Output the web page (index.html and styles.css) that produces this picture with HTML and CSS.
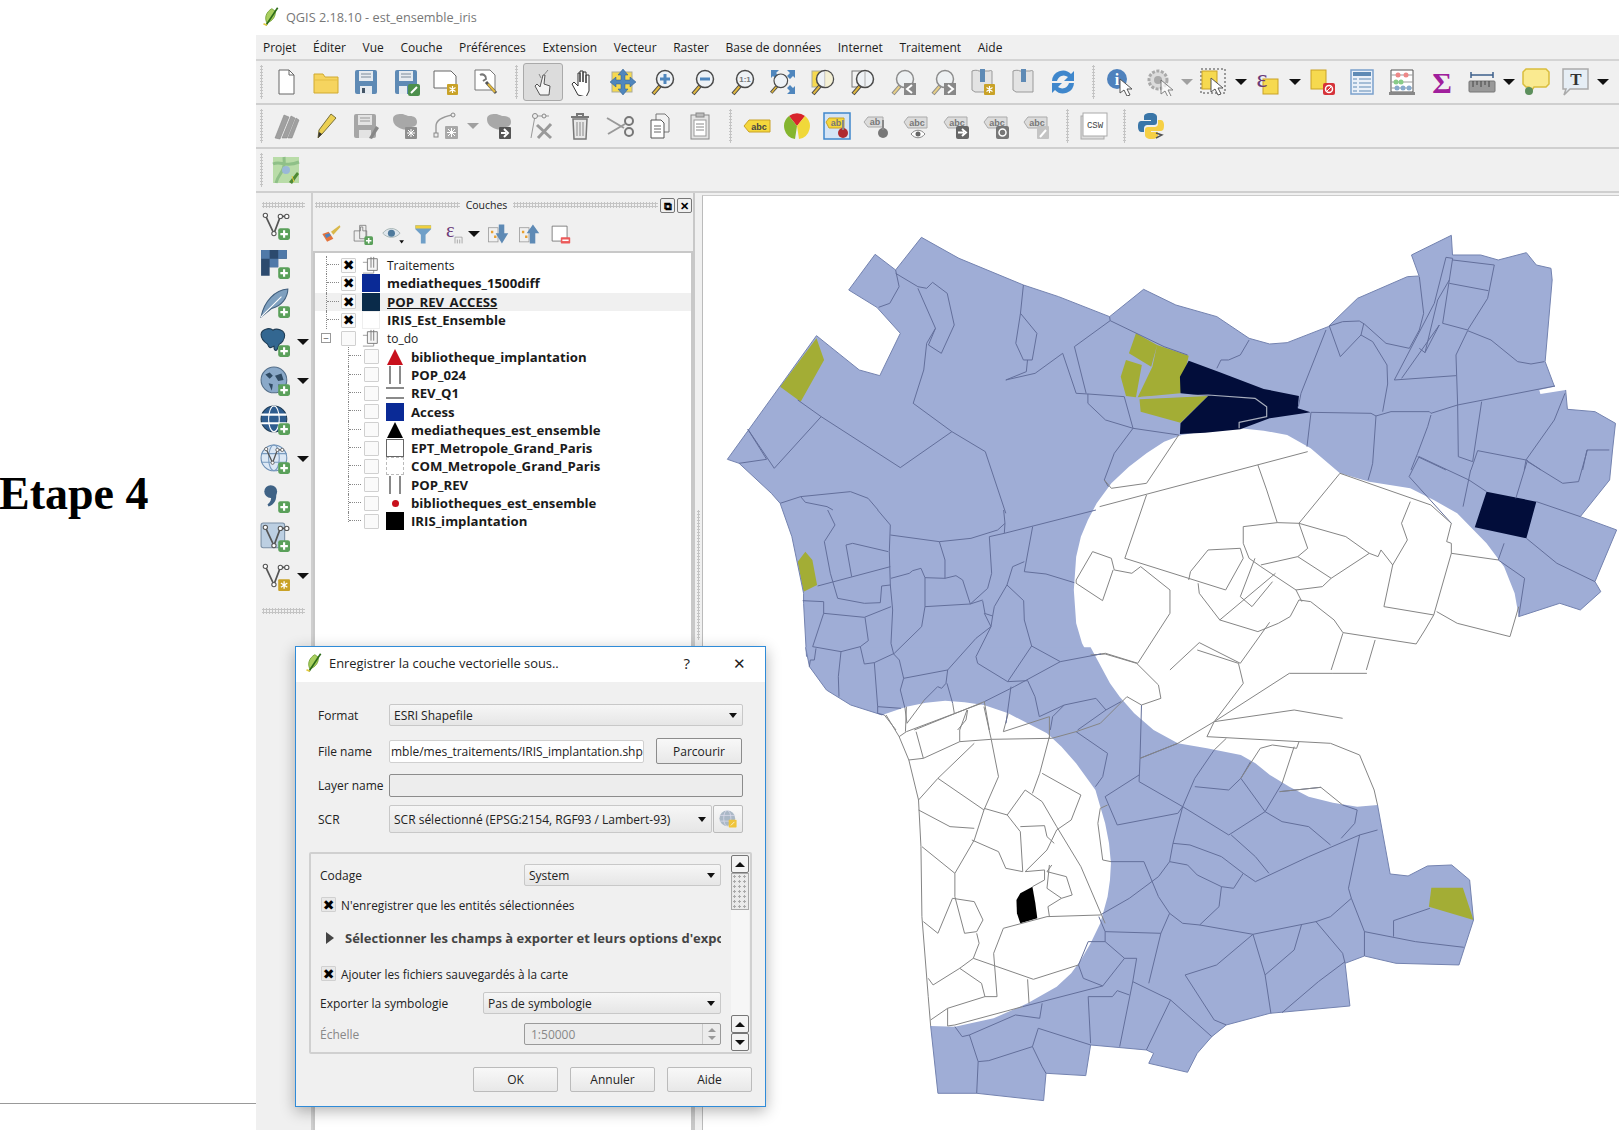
FILE: index.html
```html
<!DOCTYPE html>
<html lang="fr">
  <head>
    <meta charset="utf-8">
    <title>QGIS 2.18.10 - est_ensemble_iris</title>
    <link rel="stylesheet" href="styles.css">
  </head>
  <body>
    <svg class="defs" width="0" height="0">
      <defs>
        <g id="bplus"><rect width="11" height="11" rx="2" fill="#5aa05a"/><path d="M5.5 2v7M2 5.5h7" stroke="#fff" stroke-width="2"/></g>
        <g id="bstar"><rect width="11" height="11" rx="1" fill="#c9a227"/><path d="M5.5 2v7M2.5 3.5l6 4M8.5 3.5l-6 4" stroke="#fff" stroke-width="1.2"/></g>
        <g id="glass"><path d="M11 18L4 26" stroke="#444" stroke-width="4"/><path d="M10.5 18.5L4.5 25.5" stroke="#e0b840" stroke-width="2"/><circle cx="16" cy="11" r="8.5" fill="#eef2f6" stroke="#4a4a4a" stroke-width="1.5"/></g>
        <g id="vee"><path d="M5 5l8 17 6-16h6" fill="none" stroke="#555" stroke-width="1.6"/><circle cx="5" cy="5" r="2" fill="#fff" stroke="#555"/><circle cx="13" cy="22" r="2" fill="#fff" stroke="#555"/><circle cx="19" cy="6" r="2" fill="#fff" stroke="#555"/><circle cx="25" cy="6" r="2" fill="#fff" stroke="#555"/></g>
        <g id="cursor"><path d="M0 0l0 14 4-3 3 6 3-1-3-6 5 0z" fill="#fff" stroke="#555"/></g>
        <symbol id="i-new" viewBox="0 0 28 28"><path d="M7 2h10l5 5v19H7z" fill="#fff" stroke="#666"/><path d="M17 2v5h5" fill="none" stroke="#666"/></symbol>
        <symbol id="i-open" viewBox="0 0 28 28"><path d="M2 6h9l2 3h13v16H2z" fill="#f6d45f" stroke="#d0aa30"/><path d="M2 12h24" stroke="#e3bd45"/></symbol>
        <symbol id="i-save" viewBox="0 0 28 28"><rect x="3" y="2" width="22" height="24" rx="2" fill="#5e8ab5"/><rect x="7" y="3" width="14" height="10" fill="#e6ebf0"/><path d="M9 6h10M9 9h10" stroke="#7a8a9a"/><rect x="8" y="18" width="12" height="8" fill="#e6ebf0"/><rect x="10" y="20" width="3" height="5" fill="#456"/></symbol>
        <symbol id="i-saveas" viewBox="0 0 28 28"><rect x="3" y="2" width="22" height="24" rx="2" fill="#5e8ab5"/><rect x="7" y="3" width="14" height="10" fill="#e6ebf0"/><path d="M9 6h10M9 9h10" stroke="#7a8a9a"/><rect x="7" y="18" width="8" height="8" fill="#e6ebf0"/><rect x="16" y="16" width="12" height="12" rx="2" fill="#4c8f4c"/><path d="M19 25l6-6" stroke="#fff" stroke-width="2"/></symbol>
        <symbol id="i-print" viewBox="0 0 28 28"><path d="M2 3h17l5 5v12H2z" fill="#fff" stroke="#666"/><use href="#bstar" x="15" y="16"/></symbol>
        <symbol id="i-mgr" viewBox="0 0 28 28"><path d="M3 2h15l5 5v15H3z" fill="#fff" stroke="#777"/><path d="M8 7a4 4 0 0 1 6 4l-3 2" fill="none" stroke="#777" stroke-width="2"/><path d="M14 14l10 11" stroke="#555" stroke-width="3"/><path d="M16 16l7 8" stroke="#e0b840" stroke-width="2"/></symbol>
        <symbol id="i-touch" viewBox="0 0 28 28"><path d="M11 27l-5-9 2-2 3 3 3-12 2 0-1 9 6 2-1 9z" fill="#f4f4f4" stroke="#555"/><path d="M14 8l5-6M12 10l-2-4" stroke="#888"/></symbol>
        <symbol id="i-hand" viewBox="0 0 28 28"><path d="M9 27l-6-11 2-2 4 4V5h2v9-11h3v11-10h3v11-8h3v16l-3 6z" fill="#fff" stroke="#333"/></symbol>
        <symbol id="i-pan" viewBox="0 0 28 28"><rect x="3" y="4" width="20" height="20" fill="#f6d94f" stroke="#aa9"/><path d="M14 1l5 6h-3v5h5V9l6 5-6 5v-3h-5v5h3l-5 6-5-6h3v-5H7v3L1 14l6-5v3h5V7H9z" fill="#4f86bd" stroke="#2c5a8c" stroke-width=".5"/></symbol>
        <symbol id="i-zin" viewBox="0 0 28 28"><use href="#glass"/><path d="M16 6v10M11 11h10" stroke="#4f86bd" stroke-width="3"/></symbol>
        <symbol id="i-zout" viewBox="0 0 28 28"><use href="#glass"/><path d="M11 11h10" stroke="#4f86bd" stroke-width="3"/></symbol>
        <symbol id="i-z11" viewBox="0 0 28 28"><use href="#glass"/><text x="16" y="14" class="ic-tx">1:1</text></symbol>
        <symbol id="i-zfull" viewBox="0 0 28 28"><path d="M2 2h8l-3 3 3 3-3 3-3-3-2 2zM26 2h-8l3 3-3 3 3 3 3-3 2 2zM26 26h-8l3-3-3-3 3-3 3 3 2-2z" fill="#4f86bd"/><use href="#glass" transform="translate(-1 4) scale(.8)"/></symbol>
        <symbol id="i-zlayer" viewBox="0 0 28 28"><rect x="3" y="3" width="14" height="16" fill="#f6d94f" stroke="#aa9"/><use href="#glass"/><path d="M16 3v16" stroke="#aaa"/><path d="M16 3a8 8 0 0 1 0 16z" fill="#f6f0c8" opacity=".7"/></symbol>
        <symbol id="i-zsel" viewBox="0 0 28 28"><rect x="3" y="3" width="14" height="16" fill="#f2f2f2" stroke="#777"/><use href="#glass"/><path d="M16 3v16" stroke="#aaa"/></symbol>
        <symbol id="i-zlast" viewBox="0 0 28 28"><use href="#glass" opacity=".6"/><rect x="15" y="15" width="12" height="12" fill="#888"/><path d="M23 17l-5 4 5 4" fill="none" stroke="#fff" stroke-width="2"/></symbol>
        <symbol id="i-znext" viewBox="0 0 28 28"><use href="#glass" opacity=".6"/><rect x="15" y="15" width="12" height="12" fill="#888"/><path d="M19 17l5 4-5 4" fill="none" stroke="#fff" stroke-width="2"/></symbol>
        <symbol id="i-book" viewBox="0 0 28 28"><path d="M4 3c3-1 5-1 7 0l10 0c2-1 3 0 3 0v21H7l-3-2z" fill="#e3e3e3" stroke="#999"/><rect x="12" y="1" width="5" height="13" fill="#5e8ab5"/></symbol>
        <symbol id="i-bookn" viewBox="0 0 28 28"><path d="M3 3c3-1 5-1 7 0l10 0c2-1 3 0 3 0v21H6l-3-2z" fill="#e3e3e3" stroke="#999"/><rect x="11" y="1" width="5" height="13" fill="#5e8ab5"/><use href="#bstar" x="15" y="16"/></symbol>
        <symbol id="i-refresh" viewBox="0 0 28 28"><path d="M3 13a11 11 0 0 1 19-7l3-3v10H15l4-4a7 7 0 0 0-11 4z" fill="#3f87cc"/><path d="M25 15a11 11 0 0 1-19 7l-3 3V15h10l-4 4a7 7 0 0 0 11-4z" fill="#3f87cc"/></symbol>
        <symbol id="i-identify" viewBox="0 0 28 28"><circle cx="11" cy="11" r="10" fill="#4f82bd"/><text x="11" y="17" class="ic-i">i</text><use href="#cursor" x="14" y="11"/></symbol>
        <symbol id="i-action" viewBox="0 0 28 28"><circle cx="12" cy="12" r="9" fill="#dcdcdc" stroke="#aaa" stroke-width="3" stroke-dasharray="3 1.5"/><circle cx="12" cy="12" r="4" fill="#aaa"/><use href="#cursor" x="15" y="12" opacity=".7"/></symbol>
        <symbol id="i-select" viewBox="0 0 28 28"><rect x="1" y="1" width="24" height="24" fill="none" stroke="#444" stroke-dasharray="2 2"/><rect x="2" y="3" width="15" height="18" fill="#f6d94f" stroke="#c9a227"/><use href="#cursor" x="11" y="10"/></symbol>
        <symbol id="i-expr" viewBox="0 0 28 28"><rect x="9" y="11" width="15" height="15" fill="#f6d94f" stroke="#c9a227"/><text x="8" y="19" class="ic-eps">&#949;</text></symbol>
        <symbol id="i-desel" viewBox="0 0 28 28"><rect x="3" y="2" width="15" height="19" fill="#f6d94f" stroke="#c9a227"/><rect x="15" y="15" width="12" height="12" rx="2" fill="#d6333a"/><circle cx="21" cy="21" r="3.5" fill="none" stroke="#fff" stroke-width="1.5"/><path d="M19 23l4-4" stroke="#fff"/></symbol>
        <symbol id="i-table" viewBox="0 0 28 28"><rect x="3" y="2" width="22" height="24" fill="#eaf0f8" stroke="#7aa0cc" stroke-width="1.5"/><rect x="5" y="4" width="18" height="4" fill="#5e8ab5"/><path d="M5 11h4M11 11h12M5 15h4M11 15h12M5 19h4M11 19h12M5 23h4M11 23h12" stroke="#5e8ab5"/></symbol>
        <symbol id="i-stats" viewBox="0 0 28 28"><path d="M3 2h22v22H3z" fill="#fff" stroke="#555"/><path d="M3 7h22M3 14h22M3 20h22" stroke="#999"/><circle cx="10" cy="7" r="2.5" fill="#e88"/><circle cx="18" cy="7" r="2.5" fill="#e88"/><circle cx="8" cy="14" r="2.5" fill="#8c8"/><circle cx="13" cy="14" r="2.5" fill="#8c8"/><circle cx="9" cy="20" r="2.5" fill="#8ac"/><circle cx="15" cy="20" r="2.5" fill="#8ac"/><circle cx="21" cy="20" r="2.5" fill="#8ac"/><rect x="1" y="24" width="26" height="3" fill="#888"/></symbol>
        <symbol id="i-sum" viewBox="0 0 28 28"><text x="14" y="25" class="ic-sum">&#931;</text></symbol>
        <symbol id="i-ruler" viewBox="0 0 28 28"><path d="M3 7h22M3 4v6M25 4v6" stroke="#3d5f8a" stroke-width="1.5"/><rect x="1" y="13" width="26" height="11" rx="1" fill="#999" stroke="#777"/><path d="M5 13v6M9 13v4M13 13v6M17 13v4M21 13v6" stroke="#444"/></symbol>
        <symbol id="i-tip" viewBox="0 0 28 28"><path d="M4 1h20l3 3v12l-3 3H12l-4 6-1-6H4l-3-3V4z" fill="#faea90" stroke="#d9bd3c" stroke-width="1.5"/><circle cx="7" cy="23" r="4" fill="#5c8f5c"/></symbol>
        <symbol id="i-text" viewBox="0 0 28 28"><path d="M1 1h25v20H8l-6 6 2-6H1z" fill="#e6eef5" stroke="#aaa" stroke-width="1.5"/><text x="14" y="17" class="ic-t">T</text></symbol>
        <symbol id="i-digit" viewBox="0 0 28 28"><path d="M3 26L12 3l5 2-9 22zM10 26l9-22 4 2-8 20zM16 26l8-20 3 2-7 18z" fill="#a0a0a0" stroke="#808080" stroke-width=".5"/></symbol>
        <symbol id="i-pencil" viewBox="0 0 28 28"><path d="M6 26l1-8L19 2l5 4L10 22z" fill="#ecd053" stroke="#776f3a"/><path d="M6 26l1-6 3 2z" fill="#333"/></symbol>
        <symbol id="i-savegr" viewBox="0 0 28 28"><rect x="2" y="2" width="22" height="24" rx="2" fill="#a6a6a6"/><rect x="6" y="3" width="14" height="10" fill="#e3e3e3"/><path d="M8 6h10M8 9h10" stroke="#999"/><rect x="7" y="18" width="12" height="8" fill="#e3e3e3"/><path d="M17 26l7-12 3 2-7 11z" fill="#888"/></symbol>
        <symbol id="i-poly" viewBox="0 0 28 28"><path d="M1 7c0-4 4-5 8-5s5 2 9 2 7 2 7 6-3 5-7 5-2 4-8 2S1 12 1 7z" fill="#a8a8a8"/><rect x="13" y="15" width="12" height="12" rx="1" fill="#8e8e8e"/><path d="M19 17v8M15 21h8M16 18l6 6M22 18l-6 6" stroke="#fff"/></symbol>
        <symbol id="i-node" viewBox="0 0 28 28"><path d="M4 25V14c0-5 6-9 16-11" fill="none" stroke="#999" stroke-width="1.4"/><rect x="2" y="21" width="4" height="4" fill="#eee" stroke="#888"/><circle cx="21" cy="3" r="2" fill="#eee" stroke="#888"/><rect x="13" y="14" width="13" height="13" rx="1" fill="#a8a8a8"/><path d="M19.5 16v9M15 20.5h9M16 17l7 7M23 17l-7 7" stroke="#fff"/></symbol>
        <symbol id="i-move" viewBox="0 0 28 28"><path d="M1 7c0-4 4-5 8-5s5 2 9 2 7 2 7 6-3 5-7 5-2 4-8 2S1 12 1 7z" fill="#a8a8a8"/><rect x="13" y="15" width="12" height="12" rx="1" fill="#555"/><path d="M15 21h5M18 17l4 4-4 4" fill="none" stroke="#fff" stroke-width="2"/></symbol>
        <symbol id="i-tool" viewBox="0 0 28 28"><path d="M5 26L9 4h14" fill="none" stroke="#999"/><circle cx="9" cy="4" r="2.5" fill="#eee" stroke="#888"/><circle cx="18" cy="4" r="2" fill="#eee" stroke="#888"/><path d="M11 13l14 13M25 12L12 26" stroke="#999" stroke-width="3"/></symbol>
        <symbol id="i-trash" viewBox="0 0 28 28"><path d="M5 5h18M11 5V2h6v3" fill="none" stroke="#777" stroke-width="2"/><path d="M7 7h14l-1 20H8z" fill="#e8e8e8" stroke="#777" stroke-width="1.5"/><path d="M11 10v14M14 10v14M17 10v14" stroke="#888"/></symbol>
        <symbol id="i-scissors" viewBox="0 0 28 28"><path d="M1 6l17 10M2 22l17-10" stroke="#999" stroke-width="2"/><circle cx="23" cy="9" r="4" fill="none" stroke="#777" stroke-width="2"/><circle cx="23" cy="20" r="4" fill="none" stroke="#777" stroke-width="2"/></symbol>
        <symbol id="i-copy" viewBox="0 0 28 28"><path d="M10 2h9l4 4v14H10z" fill="#f2f2f2" stroke="#777"/><path d="M5 8h10l3 3v15H5z" fill="#fff" stroke="#555"/><path d="M8 14h7M8 17h7M8 20h7" stroke="#666"/></symbol>
        <symbol id="i-paste" viewBox="0 0 28 28"><rect x="5" y="3" width="18" height="24" fill="#e4e4e4" stroke="#888"/><rect x="10" y="1" width="8" height="4" fill="#bbb" stroke="#888"/><rect x="8" y="8" width="12" height="16" fill="#fff" stroke="#999"/><path d="M10 12h8M10 15h8M10 18h8" stroke="#888"/></symbol>
        <symbol id="i-abc" viewBox="0 0 28 28"><path d="M1 14l5-6h21v12H6z" fill="#f5d73c" stroke="#c9a227"/><text x="16" y="18" class="ic-abc">abc</text></symbol>
        <symbol id="i-pie" viewBox="0 0 28 28"><path d="M14 14L6 4a13 13 0 0 1 16 0z" fill="#d8242b"/><path d="M14 14L6 4A13 13 0 0 0 12 27z" fill="#84b52f"/><path d="M14 14l8-10a13 13 0 0 1-6 23z" fill="#f0d83a"/></symbol>
        <symbol id="i-pin" viewBox="0 0 28 28"><rect x="1" y="1" width="26" height="26" fill="#d5e4f5" stroke="#3f87cc" stroke-width="1.5"/><path d="M3 10l3-4h15v10H6z" fill="#f5d73c" stroke="#c9a227"/><text x="13" y="14" class="ic-ab">ab</text><circle cx="20" cy="21" r="5" fill="#b02a30"/><path d="M20 8v10" stroke="#888" stroke-width="2"/></symbol>
        <symbol id="i-lblpin" viewBox="0 0 28 28"><path d="M1 10l4-5h15v10H5z" fill="#dcdcdc" stroke="#aaa"/><text x="12" y="13" class="ic-ab">ab</text><circle cx="20" cy="21" r="5" fill="#777"/><path d="M20 8v10" stroke="#888" stroke-width="2"/></symbol>
        <symbol id="i-lbleye" viewBox="0 0 28 28"><path d="M1 10l4-5h19v11H5z" fill="#dcdcdc" stroke="#aaa"/><text x="14" y="14" class="ic-ab">abc</text><path d="M8 22c4-5 10-5 14 0-4 5-10 5-14 0z" fill="#fff" stroke="#888"/><circle cx="15" cy="22" r="2.5" fill="#666"/></symbol>
        <symbol id="i-lblmv" viewBox="0 0 28 28"><path d="M1 10l4-5h19v11H5z" fill="#dcdcdc" stroke="#aaa"/><text x="14" y="14" class="ic-ab">abc</text><rect x="13" y="14" width="13" height="13" rx="2" fill="#666"/><path d="M15 20.5h6M19 17l4 3.5-4 3.5" fill="none" stroke="#fff" stroke-width="2"/></symbol>
        <symbol id="i-lblrot" viewBox="0 0 28 28"><path d="M1 10l4-5h19v11H5z" fill="#dcdcdc" stroke="#aaa"/><text x="14" y="14" class="ic-ab">abc</text><rect x="13" y="14" width="13" height="13" rx="2" fill="#777"/><circle cx="19.5" cy="20.5" r="3.5" fill="none" stroke="#fff" stroke-width="1.5"/></symbol>
        <symbol id="i-lbledit" viewBox="0 0 28 28"><path d="M1 10l4-5h19v11H5z" fill="#dcdcdc" stroke="#aaa"/><text x="14" y="14" class="ic-ab">abc</text><rect x="14" y="14" width="12" height="13" rx="1" fill="#c4c4c4"/><path d="M17 25l6-7" stroke="#fff" stroke-width="2"/></symbol>
        <symbol id="i-csw" viewBox="0 0 28 28"><rect x="1" y="4" width="23" height="23" fill="#ddd" stroke="#aaa"/><rect x="3" y="1" width="24" height="23" fill="#fff" stroke="#aaa"/><text x="15" y="16" class="ic-csw">CSW</text></symbol>
        <symbol id="i-python" viewBox="0 0 28 28"><path d="M14 1c-6 0-7 2-7 4v3h7v1H4c-3 0-3 4-3 6s1 5 3 5h3v-4c0-2 2-3 3-3h7c2 0 3-1 3-3V5c0-2-2-4-6-4z" fill="#3a76a8"/><path d="M14 27c6 0 7-2 7-4v-3h-7v-1h10c3 0 3-4 3-6s-1-5-3-5h-3v4c0 2-2 3-3 3h-7c-2 0-3 1-3 3v5c0 2 2 4 6 4z" fill="#f6d045"/><path d="M19 21l6 2-6 3" fill="none" stroke="#555" stroke-width="1.4"/></symbol>
        <symbol id="i-map" viewBox="0 0 28 28"><rect x="1" y="1" width="26" height="26" fill="#b9dca8"/><path d="M1 8c8-4 12 4 26-2M4 27c2-10 10-10 8-26" stroke="#8fc088" stroke-width="3" fill="none"/><circle cx="14" cy="14" r="4" fill="#9ab8d8"/><path d="M17 26l8-10 2 2-7 10z" fill="#4f8a34"/><path d="M22 26l-2-6" stroke="#e2c93f"/></symbol>
        <symbol id="i-vadd" viewBox="0 0 28 28"><use href="#vee"/><use href="#bplus" x="17" y="17"/></symbol>
        <symbol id="i-radd" viewBox="0 0 28 28"><path d="M1 1h24v8h-8v8H9v8H1z" fill="#2c4a6e"/><path d="M1 1h8v8H1zM17 1h8v8h-8zM9 9h8v8H9z" fill="#5079a8"/><use href="#bplus" x="17" y="17"/></symbol>
        <symbol id="i-feather" viewBox="0 0 28 28"><path d="M1 27C4 12 14 2 26 1c0 8-6 16-15 18z" fill="#7fa0bf" stroke="#42607e"/><path d="M1 27L20 8" stroke="#fff"/><use href="#bplus" x="17" y="17"/></symbol>
        <symbol id="i-pg" viewBox="0 0 28 28"><path d="M1 7c0-5 8-7 11-4 3-2 11-1 11 5 0 4-3 7-5 8l-2 5c-2 2-3 0-3-3-3 1-4 3-6-2C4 14 1 11 1 7z" fill="#336791" stroke="#1d3a52"/><use href="#bplus" x="17" y="17"/></symbol>
        <symbol id="i-wms" viewBox="0 0 28 28"><circle cx="13" cy="13" r="12" fill="#8aa9c9" stroke="#526d88"/><path d="M5 8l4-2 3 3-3 3zM14 9l6-2 2 6-5 1zM8 16l4 1-1 6zM17 17l3 1-2 3z" fill="#2f4a63"/><use href="#bplus" x="17" y="17"/></symbol>
        <symbol id="i-wfs" viewBox="0 0 28 28"><circle cx="13" cy="13" r="12" fill="#2f5d8f" stroke="#1d3a52"/><path d="M1 9h24M1 17h24" stroke="#fff" stroke-width="2"/><ellipse cx="13" cy="13" rx="5" ry="12" fill="none" stroke="#fff"/><use href="#bplus" x="17" y="17"/></symbol>
        <symbol id="i-wcs" viewBox="0 0 28 28"><circle cx="13" cy="13" r="12" fill="#dce8f5" stroke="#6a8db3"/><path d="M1 9h24M1 17h24" stroke="#7a9cc0"/><ellipse cx="13" cy="13" rx="5" ry="12" fill="none" stroke="#7a9cc0"/><use href="#vee" transform="translate(2 1) scale(.75)"/><use href="#bplus" x="17" y="17"/></symbol>
        <symbol id="i-comma" viewBox="0 0 28 28"><circle cx="10" cy="8" r="6" fill="#3f6285"/><path d="M15 9c1 7-2 11-7 13l-1-2c3-2 4-5 3-8z" fill="#3f6285"/><use href="#bplus" x="17" y="17"/></symbol>
        <symbol id="i-vbox" viewBox="0 0 28 28"><rect x="1" y="1" width="22" height="23" rx="2" fill="#bccfe2" stroke="#7a8fa5"/><use href="#vee"/><use href="#bplus" x="17" y="17"/></symbol>
        <symbol id="i-vnew" viewBox="0 0 28 28"><use href="#vee"/><use href="#bstar" x="17" y="17"/></symbol>
        <symbol id="i-style" viewBox="0 0 28 28"><path d="M3 14l8-3 6 9-8 4z" fill="#e3733c"/><path d="M6 15l6-2 2 3-6 3z" fill="#4f82bd"/><path d="M14 11L25 3l1 2-9 10z" fill="#d9b84a"/></symbol>
        <symbol id="i-group" viewBox="0 0 28 28"><path d="M4 10h8V5h3v5h5v13H4z" fill="#eee" stroke="#777"/><path d="M11 3h8v17h-8z" fill="none" stroke="#777"/><use href="#bplus" x="17" y="17"/></symbol>
        <symbol id="i-treegrp" viewBox="0 0 20 20"><path d="M1 7h12v12H1" fill="none" stroke="#999"/><path d="M6 3h11v13H6z" fill="#f6f6f6" stroke="#777"/><path d="M10 1v12M13 1v12" stroke="#777"/></symbol>
        <symbol id="i-eye" viewBox="0 0 28 28"><path d="M1 13c6-8 16-8 22 0-6 7-16 7-22 0z" fill="#dfe6ec" stroke="#9aa"/><circle cx="12" cy="13" r="4.5" fill="#4f7a9c"/><path d="M22 22h6l-3 4z" fill="#111"/></symbol>
        <symbol id="i-filter" viewBox="0 0 28 28"><path d="M3 3h20v5l-7 7v11h-6V15L3 8z" fill="#6f9fc8"/><path d="M3 3h20v4H3z" fill="#f0cf3e"/></symbol>
        <symbol id="i-eps" viewBox="0 0 28 28"><text x="8" y="18" class="ic-eps">&#949;</text><path d="M14 26v-8h9v8M17 26v-5M20 26v-5" fill="none" stroke="#999"/></symbol>
        <symbol id="i-down" viewBox="0 0 28 28"><rect x="2" y="6" width="12" height="18" fill="#f0f0f0" stroke="#999"/><path d="M5 10h3v3H5zM9 16h3v3H9z" fill="#e8a030"/><path d="M15 2h7v11h5l-8 13-8-13h4z" fill="#5e8ab5"/></symbol>
        <symbol id="i-up" viewBox="0 0 28 28"><rect x="2" y="6" width="12" height="18" fill="#f0f0f0" stroke="#999"/><path d="M5 10h3v3H5zM9 16h3v3H9z" fill="#e8a030"/><path d="M15 26h7V13h5L19 2 11 13h4z" fill="#5e8ab5"/></symbol>
        <symbol id="i-rmlayer" viewBox="0 0 28 28"><path d="M4 4h19v19H4z" fill="#fff" stroke="#666"/><rect x="15" y="18" width="12" height="8" rx="1" fill="#ec5a5a"/><path d="M17 22h8" stroke="#fff" stroke-width="2"/></symbol>
        <symbol id="i-crs" viewBox="0 0 28 28"><circle cx="13" cy="13" r="11" fill="#aab8c6"/><path d="M2 9h22M2 17h22" stroke="#dde"/><ellipse cx="13" cy="13" rx="5" ry="11" fill="none" stroke="#dde"/><rect x="15" y="15" width="11" height="11" rx="1" fill="#f0c43a"/><path d="M18 23l5-5" stroke="#fff"/></symbol>
        <symbol id="i-qgis" viewBox="0 0 24 24"><path d="M13 2C6 6 4 13 7 19c7-2 11-8 10-14z" fill="#a9cf5f" stroke="#6f9d2e"/><path d="M6 22L20 1" stroke="#2c6b1a" stroke-width="2"/><path d="M3 20l4 2" stroke="#e2c93f" stroke-width="2"/></symbol>
      </defs>
    </svg>

    <div class="doc">
      <h1 class="doc-title">Etape 4</h1>
      <div class="doc-rule"></div>
    </div>

    <div class="app">
      <div class="titlebar">
        <svg class="qgis-logo"><use href="#i-qgis"/></svg>
        <span>QGIS 2.18.10 - est_ensemble_iris</span>
      </div>

      <div class="menubar">
        <span>Projet</span><span>Éditer</span><span>Vue</span><span>Couche</span><span>Préférences</span><span>Extension</span><span>Vecteur</span><span>Raster</span><span>Base de données</span><span>Internet</span><span>Traitement</span><span>Aide</span>
      </div>

      <div class="toolbar">
        <i class="grip"></i>
        <b class="tool"><svg><use href="#i-new"/></svg></b>
        <b class="tool"><svg><use href="#i-open"/></svg></b>
        <b class="tool"><svg><use href="#i-save"/></svg></b>
        <b class="tool"><svg><use href="#i-saveas"/></svg></b>
        <b class="tool"><svg><use href="#i-print"/></svg></b>
        <b class="tool"><svg><use href="#i-mgr"/></svg></b>
        <i class="grip wide"></i>
        <b class="tool on"><svg><use href="#i-touch"/></svg></b>
        <b class="tool"><svg><use href="#i-hand"/></svg></b>
        <b class="tool"><svg><use href="#i-pan"/></svg></b>
        <b class="tool"><svg><use href="#i-zin"/></svg></b>
        <b class="tool"><svg><use href="#i-zout"/></svg></b>
        <b class="tool"><svg><use href="#i-z11"/></svg></b>
        <b class="tool"><svg><use href="#i-zfull"/></svg></b>
        <b class="tool"><svg><use href="#i-zlayer"/></svg></b>
        <b class="tool"><svg><use href="#i-zsel"/></svg></b>
        <b class="tool"><svg><use href="#i-zlast"/></svg></b>
        <b class="tool"><svg><use href="#i-znext"/></svg></b>
        <b class="tool"><svg><use href="#i-bookn"/></svg></b>
        <b class="tool"><svg><use href="#i-book"/></svg></b>
        <b class="tool"><svg><use href="#i-refresh"/></svg></b>
        <i class="grip wide"></i>
        <b class="tool"><svg><use href="#i-identify"/></svg></b>
        <b class="tool"><svg><use href="#i-action"/></svg></b><u class="caret off"></u>
        <b class="tool"><svg><use href="#i-select"/></svg></b><u class="caret"></u>
        <b class="tool"><svg><use href="#i-expr"/></svg></b><u class="caret"></u>
        <b class="tool"><svg><use href="#i-desel"/></svg></b>
        <b class="tool"><svg><use href="#i-table"/></svg></b>
        <b class="tool"><svg><use href="#i-stats"/></svg></b>
        <b class="tool"><svg><use href="#i-sum"/></svg></b>
        <b class="tool"><svg><use href="#i-ruler"/></svg></b><u class="caret"></u>
        <b class="tool"><svg><use href="#i-tip"/></svg></b>
        <b class="tool"><svg><use href="#i-text"/></svg></b><u class="caret"></u>
      </div>

      <div class="toolbar">
        <i class="grip"></i>
        <b class="tool"><svg><use href="#i-digit"/></svg></b>
        <b class="tool"><svg><use href="#i-pencil"/></svg></b>
        <b class="tool"><svg><use href="#i-savegr"/></svg></b>
        <b class="tool"><svg><use href="#i-poly"/></svg></b>
        <b class="tool"><svg><use href="#i-node"/></svg></b><u class="caret off"></u>
        <b class="tool"><svg><use href="#i-move"/></svg></b>
        <b class="tool"><svg><use href="#i-tool"/></svg></b>
        <b class="tool"><svg><use href="#i-trash"/></svg></b>
        <b class="tool"><svg><use href="#i-scissors"/></svg></b>
        <b class="tool"><svg><use href="#i-copy"/></svg></b>
        <b class="tool"><svg><use href="#i-paste"/></svg></b>
        <i class="grip wide"></i>
        <b class="tool"><svg><use href="#i-abc"/></svg></b>
        <b class="tool"><svg><use href="#i-pie"/></svg></b>
        <b class="tool"><svg><use href="#i-pin"/></svg></b>
        <b class="tool"><svg><use href="#i-lblpin"/></svg></b>
        <b class="tool"><svg><use href="#i-lbleye"/></svg></b>
        <b class="tool"><svg><use href="#i-lblmv"/></svg></b>
        <b class="tool"><svg><use href="#i-lblrot"/></svg></b>
        <b class="tool"><svg><use href="#i-lbledit"/></svg></b>
        <i class="grip wide"></i>
        <b class="tool"><svg><use href="#i-csw"/></svg></b>
        <i class="grip wide"></i>
        <b class="tool"><svg><use href="#i-python"/></svg></b>
      </div>

      <div class="toolbar">
        <i class="grip"></i>
        <b class="tool"><svg><use href="#i-map"/></svg></b>
      </div>

      <div class="workspace">
        <div class="sidebar">
          <i class="hgrip first"></i>
          <b class="side-tool"><svg><use href="#i-vadd"/></svg></b>
          <b class="side-tool"><svg><use href="#i-radd"/></svg></b>
          <b class="side-tool"><svg><use href="#i-feather"/></svg></b>
          <b class="side-tool"><svg><use href="#i-pg"/></svg><u class="caret"></u></b>
          <b class="side-tool"><svg><use href="#i-wms"/></svg><u class="caret"></u></b>
          <b class="side-tool"><svg><use href="#i-wfs"/></svg></b>
          <b class="side-tool"><svg><use href="#i-wcs"/></svg><u class="caret"></u></b>
          <b class="side-tool"><svg><use href="#i-comma"/></svg></b>
          <b class="side-tool"><svg><use href="#i-vbox"/></svg></b>
          <b class="side-tool"><svg><use href="#i-vnew"/></svg><u class="caret"></u></b>
          <i class="hgrip"></i>
        </div>

        <div class="layers">
          <div class="dock-head">
            <i class="hgrip fill"></i>
            <span>Couches</span>
            <i class="hgrip fill"></i>
            <span class="dock-btn">&#10697;</span>
            <span class="dock-btn">&#10005;</span>
          </div>
          <div class="dock-tools">
            <b><svg><use href="#i-style"/></svg></b>
            <b><svg><use href="#i-group"/></svg></b>
            <b><svg><use href="#i-eye"/></svg></b>
            <b><svg><use href="#i-filter"/></svg></b>
            <b><svg><use href="#i-eps"/></svg></b><u class="caret"></u>
            <b><svg><use href="#i-down"/></svg></b>
            <b><svg><use href="#i-up"/></svg></b>
            <b><svg><use href="#i-rmlayer"/></svg></b>
          </div>
          <div class="tree">
            <div class="row top"><span class="twig"><i></i></span><span class="check on">&#10006;</span><svg class="sym"><use href="#i-treegrp"/></svg><span class="name plain">Traitements</span></div>
            <div class="row top"><span class="twig"><i></i></span><span class="check on">&#10006;</span><span class="sym swatch blue"></span><span class="name">mediatheques_1500diff</span></div>
            <div class="row top current"><span class="twig"><i></i></span><span class="check on">&#10006;</span><span class="sym swatch navy"></span><span class="name under">POP_REV_ACCESS</span></div>
            <div class="row top"><span class="twig"><i></i></span><span class="check on">&#10006;</span><span class="sym swatch blank"></span><span class="name">IRIS_Est_Ensemble</span></div>
            <div class="row top"><span class="twig end"><i></i><em>&#8722;</em></span><span class="check"></span><svg class="sym"><use href="#i-treegrp"/></svg><span class="name plain">to_do</span></div>
            <div class="row sub"><span class="twig"><i></i></span><span class="check"></span><span class="sym tri red"></span><span class="name">bibliotheque_implantation</span></div>
            <div class="row sub"><span class="twig"><i></i></span><span class="check"></span><span class="sym vlines"></span><span class="name">POP_024</span></div>
            <div class="row sub"><span class="twig"><i></i></span><span class="check"></span><span class="sym hlines"></span><span class="name">REV_Q1</span></div>
            <div class="row sub"><span class="twig"><i></i></span><span class="check"></span><span class="sym swatch blue"></span><span class="name">Access</span></div>
            <div class="row sub"><span class="twig"><i></i></span><span class="check"></span><span class="sym tri"></span><span class="name">mediatheques_est_ensemble</span></div>
            <div class="row sub"><span class="twig"><i></i></span><span class="check"></span><span class="sym swatch outline"></span><span class="name">EPT_Metropole_Grand_Paris</span></div>
            <div class="row sub"><span class="twig"><i></i></span><span class="check"></span><span class="sym swatch dashed"></span><span class="name">COM_Metropole_Grand_Paris</span></div>
            <div class="row sub"><span class="twig"><i></i></span><span class="check"></span><span class="sym vlines"></span><span class="name">POP_REV</span></div>
            <div class="row sub"><span class="twig"><i></i></span><span class="check"></span><span class="sym dot"></span><span class="name">bibliotheques_est_ensemble</span></div>
            <div class="row sub"><span class="twig last"><i></i></span><span class="check"></span><span class="sym swatch black"></span><span class="name">IRIS_implantation</span></div>
          </div>
        </div>

        <div class="splitter"><i></i></div>

        <div class="canvas">
          <svg class="map" viewBox="702 196 917 934">
            <g transform="translate(700 190) scale(.5862 .3333)">
              <path class="blue" d="M45 808L197 437L270 540L305 557L340 430L300 352L252 300L297 193L332 240L376 142L440 205L550 285L610 320L697 380L755 298L810 345L880 380L935 445L970 462L1000 458L1070 410L1120 325L1205 260L1225 258L1212 195L1280 136L1282 195L1330 195L1360 210L1408 188L1425 225L1450 235L1452 270L1440 515L1456 590L1430 600L1432 612L1475 600L1478 658L1525 665L1560 700L1555 780L1550 870L1500 980L1562 1020L1525 1175L1535 1205L1500 1260L1465 1240L1395 1280L1388 1210L1370 1130L1340 1060L1290 970L1250 930L1210 895L1140 875L1090 850L1060 805L1040 775L1000 735L960 722L920 715L870 720L820 735L790 755L760 790L730 830L700 880L675 940L660 990L648 1040L640 1100L636 1200L640 1300L650 1360L662 1400L180 1400L175 1240L175 1210L155 1040L135 940L120 910L65 820Z"/>
              <path class="olive" d="M197 445L210 510L170 635L135 590ZM742 430L778 465L768 530L730 490ZM778 465L832 497L818 610L745 622L770 530ZM725 510L752 525L742 622L725 618L716 560ZM748 628L865 618L818 698L750 665ZM178 1085L190 1110L198 1185L175 1205L165 1115Z"/>
              <path class="navy" d="M832 512L885 547L960 597L1020 618L1018 655L1040 667L970 685L920 718L860 728L817 732L818 700L865 618L818 610L817 560ZM1340 905L1425 935L1408 1045L1320 1012Z"/>
              <path class="edge" d="M65 820L45 808L197 437L270 540L305 557L340 430L300 352L252 300L297 193L332 240L376 142L440 205L550 285L610 320L697 380L755 298L810 345L880 380L935 445L970 462L1000 458L1070 410L1120 325L1205 260L1225 258L1212 195L1280 136L1282 195L1330 195L1360 210L1408 188L1425 225L1450 235L1452 270L1440 515L1456 590M1475 600L1478 658L1525 665L1560 700L1555 780L1550 870L1500 980L1562 1020L1525 1175L1535 1205L1500 1260L1465 1240L1395 1280M65 820L120 910L135 940L155 1040L175 1210L175 1240L180 1400"/>
              <path class="line" d="M332 240L338 290L322 340L303 352M332 250L370 290L385 295L395 277L420 310L432 405L410 490L388 465L400 415L370 295M400 415L385 460L380 540L362 640L428 725L340 833L205 680L165 630M205 680L125 835L80 718L112 808L65 820M428 725L485 785L520 970M302 960L285 925L255 905L170 920L135 940M170 920L178 937L215 950L225 960M550 285L545 370L537 460L550 510L565 510L573 430L545 370M557 510L555 545L520 570L570 550L617 490L640 610L660 612L722 620M697 380L698 392L637 470L657 610M698 392L790 470L830 495M660 612L660 640L690 690L737 715L815 735M722 620L737 715L705 790L688 870L695 890M935 450L920 495L900 510L887 510L880 535M1143 840L1138 870M1410 810L1390 925M1410 815L1470 880L1497 875L1512 780M1313 840L1300 950M1225 800L1310 870L1340 905M1425 935L1500 980M1225 800L1208 860L1280 1000M1408 1045L1460 1120L1525 1175M1370 1060L1360 1110L1405 1165L1395 1280"/>
              <path class="pale" d="M750 622L865 615L945 625L965 650L965 680L918 697L918 715"/>
              <path class="grey" d="M680 950L1035 785M815 735L760 880L700 895L688 870M950 825L965 900L983 998L925 1010L925 1060L935 1105L955 1130L1015 1200L1060 1190L1075 1165L1140 1090L1100 1040L1020 1000L1090 850L1245 945L1280 1000M760 915L723 1105L895 1200L925 1105L920 1075L865 1080L835 1145L832 1170M983 998L1020 1000L1035 1075L1018 1100L955 1125M1018 1100L1075 1165M1140 1090L1155 1100L1160 1080L1180 1125L1165 1250L1250 1275L1280 1090L1360 1110M1210 935L1195 1000L1205 1050L1180 1125M1280 1000L1272 1055L1280 1060L1280 1090M1255 1265L1290 1300L1380 1340L1395 1250M1250 1275L1235 1320L1220 1362L1095 1328L1080 1290L1040 1235L1020 1230L1005 1280L985 1300L950 1325L885 1290L850 1210L848 1180M1015 1200L1025 1235M970 1297L920 1420L850 1358L800 1440M1095 1330L1075 1440M1150 1350L1135 1440M750 1130L735 1150L705 1140L700 1105L668 1085L640 1170L640 1180L685 1232L703 1140M750 1130L800 1200L800 1270L745 1420L690 1390L615 1410M945 1105L920 1220L940 1250L975 1175M885 1290L980 1150"/>
            </g>
            <g transform="translate(760 650) scale(.4847 .3333)">
              <path class="blue" d="M92 -8L100 50L135 120L185 165L250 195L300 170L340 158L380 152L420 157L460 165L510 190L550 220L590 250L620 290L650 340L690 420L700 470L710 520L718 580L722 640L720 690L715 740L700 820L680 880L660 930L640 970L610 1010L550 1060L480 1105L400 1130L350 1128L365 1330L445 1330L583 1352L588 1270L670 1277L680 1185L795 1200L810 1210L800 1240L880 1267L900 1210L930 1160L960 1125L1050 1090L1215 1068L1205 940L1245 918L1310 940L1440 945L1470 810L1462 690L1425 645L1375 648L1335 678L1298 672L1272 465L1230 470L1180 458L1130 440L1090 410L1050 375L1020 340L990 315L920 295L860 280L810 240L770 190L740 140L720 100L680 -8Z"/>
              <path class="olive" d="M1383 713L1448 713L1470 810L1378 770Z"/>
              <path class="black" d="M560 710L566 760L570 805L535 820L528 790L527 750L535 730Z"/>
              <path class="edge" d="M350 1128L365 1330L445 1330L583 1352L588 1270L670 1277L680 1185L795 1200L810 1210L800 1240L880 1267L900 1210L930 1160L960 1125L1050 1090L1215 1068L1205 940L1245 918L1310 940L1440 945L1470 810L1462 690L1425 645L1375 648L1335 678L1298 672L1272 465M92 -8L100 50L135 120L185 165L250 195"/>
              <path class="line" d="M785 165L782 325L780 395L870 470L860 490L735 525L710 440L780 375M650 245L715 310L705 380L690 410M782 325L860 280M870 470L895 385L935 300M895 410L965 420L990 385L1040 485L965 555L870 470M990 385L1010 335M1075 400L1040 485M1070 425L1155 412M1200 465L1230 480L1225 520L1197 565M1040 485L1075 515L1130 530L1175 585M870 470L850 580L843 635L820 680L760 745L700 795M850 580L885 585L950 620L995 670L975 715L950 710L945 770L905 825L870 820L843 790L820 740L790 635L722 635M843 635L880 645L900 675L950 710M970 555L1020 620L1048 670M1272 540L1235 555L1130 620L1020 695L995 670M905 825L1015 853L1145 815L1200 910L1205 940M1235 555L1212 715L1218 745L1175 800L1145 815M1218 745L1245 845L1245 918M1245 845L1350 875L1450 892M1380 775L1305 812L1305 860M843 790L825 850L710 845L697 800M825 850L800 1000M1015 853L940 945L875 975L935 1110L960 1125M1015 853L1040 975L1052 1090M1115 825L1100 900L1040 975M1205 935L1150 995L1075 1088M710 845L710 875L675 875L655 945L665 985L705 1008L750 925L775 925L767 995L845 1050L930 1160M710 875L750 925M705 1008L540 1070M767 995L740 1190M845 1050L795 1200M675 1040L680 1180M675 1040L725 1040L735 1022L760 1035M580 1060L575 1105L525 1095L430 1155L415 1160L400 1130M572 1135L680 1185M572 1135L560 1190L580 1250L588 1270M430 1155L448 1235L445 1330M448 1235L470 1232L560 1190"/>
              <path class="grey" d="M455 160L300 245L285 260M680 15L710 12L775 40L820 105L825 145L785 165L755 140L700 220L650 245L600 265L475 268L410 275L335 325L305 330L285 260L258 195M300 170L298 245M510 190L500 245L595 200M595 200L595 265M540 1070L400 1125L385 1128M782 325L860 280L935 215L1100 180L1200 205M935 215L1090 70L1180 70L1250 70M935 215L920 260L1175 280L1235 315L1265 420L1272 465M935 215L995 100L985 40L900 0M935 300L960 265M990 385L1030 295L1055 285L1105 295L1110 275M1100 290L1075 400M1070 425L1155 412L1200 465M475 268L490 380L460 480L440 570L400 670L400 740L420 850L445 845L458 810L440 755L395 745L365 850L335 815M460 170L475 268M425 180L410 240L410 275M320 245L335 325M305 330L325 450L330 590L332 800L345 1040L350 1128M325 450L365 385L460 480M365 385L440 280M325 480L390 530L440 535M460 475L508 495L545 420L580 455L610 530L660 650L710 820M508 495L535 545L540 665L505 655L490 605L435 570M580 370L660 435L640 510L610 540L590 600L545 665M595 260L575 370L560 430M535 530L585 527L590 560L605 580M332 590L400 670M600 645L590 665L630 680L642 735L620 745L590 715L595 645M620 745L592 770L595 800M545 665L585 660L585 690L560 710M438 925L410 955L355 1005L345 985M438 925L562 988L655 945M410 955L455 1000L462 1040L385 1075L350 1110M462 1040L487 1040M550 988L553 1060M385 1075L385 1128M700 795L590 800L500 835L480 910L487 1040M700 475L695 520L705 630L722 635M700 475L715 465M438 925L450 880L445 850"/>
            </g>
            <g transform="translate(780 510) scale(.3333)">
              <path class="line" d="M140 0L162 45L130 95L148 190L170 265L250 280L298 278L302 228L328 225M290 0L328 45L325 125L328 225L335 300L330 400L338 432M195 105L215 100L322 125M195 105L212 200M110 228L328 170M328 75L475 95L570 85L650 60L672 40L668 0M672 40L670 70L945 0M475 95L492 150L492 205L432 203L420 175L395 182L385 190L330 205M492 205L525 197L545 210L568 282L432 290M432 203L432 290L422 350L340 430L280 458L250 462L238 410M65 272L128 275L128 310L250 322L330 290M128 310L95 410L180 425L238 410L262 392L252 322M105 415L100 450L88 450L85 470M180 425L172 500L174 560M280 458L290 590L290 610L310 615M290 590L360 595M338 432L355 450L368 505L358 540L372 595M368 505L500 480L495 520L482 535L470 530L430 570M500 480L585 385L630 350L610 310L635 318L630 350M605 272L612 310M568 282L605 270M568 282L620 235L632 190L625 80L670 70M755 50L730 185L795 192L880 218M730 155L695 170L678 225L640 290L635 318M678 225L728 272L730 330L752 408L838 455M752 408L680 515L590 460L585 440L630 350M498 520L515 580M838 455L700 530L610 575M838 455L960 432M680 515L740 512L762 560L775 620M690 530L675 640M775 620L850 585L945 565L975 600L1020 575M850 585L815 620L808 660M975 600L890 660"/>
              <path class="grey" d="M430 570L378 640M372 595L378 640M610 575L400 660M515 580L520 610M560 600L555 630L530 660M610 575L625 660M310 615L345 660"/>
            </g>
            <g transform="translate(1270 230) scale(.3333)">
              <path class="line" d="M175 288L215 275L265 273L280 282L345 340L415 355M445 140L458 250L445 300L415 355M175 288L208 380L270 315L278 282M270 315L305 335L348 405L350 462M165 300L90 490L82 530M350 462L335 545M370 450L555 437M525 82L545 85L535 150L515 280L590 300L650 205L670 105L545 90M525 82L490 220L370 450M535 160L652 182M535 150L500 210L462 368L445 355M505 285L462 368M505 285L392 445M590 302L555 375L560 525M590 302L660 330L740 395L780 402L820 395M852 468L560 525L480 550L475 545L360 545L315 558L300 550L120 547M120 548L108 650M315 558L305 700L300 720M480 555L470 590L440 670L420 720M560 525L562 680L605 695L632 515M882 490L850 570L765 690L620 662L600 720M765 690L810 720M765 690L760 720M440 680L525 720M1015 660L948 660L935 720"/>
            </g>
          </svg>
        </div>
      </div>
    </div>

    <div class="dialog">
      <div class="dialog-title">
        <svg class="qgis-logo"><use href="#i-qgis"/></svg>
        <span class="dialog-name">Enregistrer la couche vectorielle sous..</span>
        <span class="dialog-help">?</span>
        <span class="dialog-close">&#10005;</span>
      </div>
      <div class="dialog-body">
        <div class="form-row"><label>Format</label><div class="combo"><span>ESRI Shapefile</span><u class="caret"></u></div></div>
        <div class="form-row file"><label>File name</label><div class="input">mble/mes_traitements/IRIS_implantation.shp</div><div class="btn browse">Parcourir</div></div>
        <div class="form-row layer"><label>Layer name</label><div class="input sunken"></div></div>
        <div class="form-row scr"><label>SCR</label><div class="combo tall"><span>SCR sélectionné (EPSG:2154, RGF93 / Lambert-93)</span><u class="caret"></u></div><div class="btn crs"><svg><use href="#i-crs"/></svg></div></div>

        <div class="group">
          <div class="group-main">
            <div class="opt-row"><label>Codage</label><div class="combo short"><span>System</span><u class="caret"></u></div></div>
            <div class="opt-row chk"><span class="check on">&#10006;</span><label>N'enregistrer que les entités sélectionnées</label></div>
            <div class="opt-row fold"><u class="tri-right"></u><strong>Sélectionner les champs à exporter et leurs options d'export</strong></div>
            <div class="opt-row chk"><span class="check on">&#10006;</span><label>Ajouter les fichiers sauvegardés à la carte</label></div>
            <div class="opt-row"><label>Exporter la symbologie</label><div class="combo long"><span>Pas de symbologie</span><u class="caret"></u></div></div>
            <div class="opt-row dim"><label>Échelle</label><div class="spin"><span>1:50000</span><em><u></u><u></u></em></div></div>
          </div>
          <div class="scroll">
            <span class="sb-btn up"></span>
            <span class="sb-thumb"></span>
            <span class="sb-track"></span>
            <span class="sb-btn up"></span>
            <span class="sb-btn down"></span>
          </div>
        </div>

        <div class="dialog-actions">
          <div class="btn action">OK</div>
          <div class="btn action">Annuler</div>
          <div class="btn action">Aide</div>
        </div>
      </div>
    </div>
  </body>
</html>
```

FILE: styles.css
```css
* {
  box-sizing: border-box;
}

body {
  margin: 0;
  display: flex;
  width: 1619px;
  height: 1130px;
  overflow: hidden;
  background-color: #fff;
  font-family: "Open Sans", Arial, sans-serif;
  font-size: 12px;
  color: #222;
}

.defs {
  position: absolute;
}

/* text inside the icons */
.ic-tx { font: bold 8px "Liberation Sans", sans-serif; fill: #777; text-anchor: middle; }
.ic-i { font: bold 16px "Liberation Serif", serif; fill: #fff; text-anchor: middle; }
.ic-eps { font: 26px "Liberation Serif", serif; fill: #6a3a78; text-anchor: middle; }
.ic-sum { font: bold 30px "Liberation Serif", serif; fill: #a01f9c; text-anchor: middle; }
.ic-t { font: bold 17px "Liberation Serif", serif; fill: #333; text-anchor: middle; }
.ic-abc { font: bold 9px "Liberation Sans", sans-serif; fill: #444; text-anchor: middle; }
.ic-ab { font: bold 9px "Liberation Sans", sans-serif; fill: #777; text-anchor: middle; }
.ic-csw { font: 9px "Liberation Mono", monospace; fill: #444; text-anchor: middle; }

/* left part of the document page */
.doc {
  width: 256px;
  flex: none;
  display: flex;
  flex-direction: column;
  padding-top: 466px;
}

.doc-title {
  margin: 0 0 0 -1px;
  font-family: "Liberation Serif", serif;
  font-size: 46px;
  font-weight: bold;
  line-height: 56px;
  color: #000;
}

.doc-rule {
  margin-top: auto;
  margin-bottom: 26px;
  border-top: 1px solid #999;
}

/* main window */
.app {
  flex: 1;
  min-width: 0;
  display: flex;
  flex-direction: column;
  background-color: #f0f0f0;
}

.titlebar {
  height: 35px;
  flex: none;
  display: flex;
  align-items: center;
  gap: 5px;
  padding: 0 0 2px 5px;
  background-color: #fff;
  color: #777;
  font-size: 12.7px;
}

.qgis-logo {
  width: 20px;
  height: 20px;
  flex: none;
}

.menubar {
  height: 26px;
  flex: none;
  display: flex;
  align-items: center;
  gap: 16.6px;
  padding-left: 7px;
  border-bottom: 2px solid #d4d4d4;
  color: #1c1c1c;
}

.toolbar {
  height: 44px;
  flex: none;
  display: flex;
  align-items: center;
  border-bottom: 2px solid #cfcfcf;
}

.grip {
  width: 10px;
  height: 34px;
  flex: none;
  background-image: radial-gradient(#c4c4c4 1px, transparent 1.2px);
  background-size: 3px 3px;
  background-position: 4px 0;
  background-repeat: repeat-y;
}

.grip.wide {
  width: 17px;
  background-position: 9px 0;
}

.tool {
  width: 40px;
  height: 38px;
  flex: none;
  display: flex;
  align-items: center;
  justify-content: center;
}

.tool svg {
  width: 28px;
  height: 28px;
}

.tool.on {
  background-color: #dcdcdc;
  border: 1px solid #aaa;
  border-radius: 3px;
}

.caret {
  width: 0;
  height: 0;
  flex: none;
  border-left: 6px solid transparent;
  border-right: 6px solid transparent;
  border-top: 6px solid #111;
  margin: 0 1px;
}

.caret.off {
  border-top-color: #a0a0a0;
}

/* workspace under the toolbars */
.workspace {
  flex: 1;
  min-height: 0;
  display: flex;
}

.sidebar {
  width: 57px;
  flex: none;
  display: flex;
  flex-direction: column;
  padding-top: 9px;
  border-right: 2px solid #cfcfcf;
}

.hgrip {
  display: block;
  height: 6px;
  margin: 13px 6px 0;
  flex: none;
  background-image: radial-gradient(#c4c4c4 1px, transparent 1.2px);
  background-size: 3px 3px;
}

.hgrip.first {
  margin: 0 6px -3px;
}

.side-tool {
  height: 39px;
  flex: none;
  display: flex;
  align-items: center;
  padding-left: 4px;
  gap: 6px;
}

.side-tool svg {
  width: 30px;
  height: 30px;
}

.layers {
  width: 380px;
  flex: none;
  display: flex;
  flex-direction: column;
}

.dock-head {
  height: 24px;
  flex: none;
  display: flex;
  align-items: center;
  gap: 6px;
  padding: 0 1px 0 2px;
  font-size: 10.5px;
}

.hgrip.fill {
  flex: 1;
  margin: 0;
}

.dock-btn {
  width: 15px;
  height: 15px;
  display: flex;
  align-items: center;
  justify-content: center;
  border: 1px solid #777;
  border-radius: 2px;
  font-size: 11px;
  font-weight: 600;
  line-height: 1;
  margin-left: -4px;
  color: #000;
}

.dock-tools {
  height: 34px;
  flex: none;
  display: flex;
  align-items: center;
  padding-left: 2px;
}

.dock-tools b {
  width: 31px;
  height: 24px;
  flex: none;
  display: flex;
  align-items: center;
  justify-content: center;
}

.dock-tools svg {
  width: 22px;
  height: 22px;
}

.dock-tools .caret {
  margin: 0 2px 0 -2px;
}

.tree {
  flex: 1;
  padding-top: 3px;
  background-color: #fff;
  border: 2px solid #c8c8c8;
  border-bottom: 0;
}

.row {
  height: 18.3px;
  display: flex;
  align-items: center;
  font-size: 13.2px;
  font-weight: 700;
  color: #1a1a1a;
}

.row.top {
  padding-left: 11px;
}

.row.sub {
  padding-left: 33px;
}

.row.current {
  background-color: #f0f0f0;
}

.twig {
  width: 13px;
  height: 100%;
  flex: none;
  border-left: 1px dotted #888;
}

.twig i {
  display: block;
  height: 9px;
  border-bottom: 1px dotted #888;
}

.twig.last {
  height: 10px;
  align-self: flex-start;
}

.twig.end {
  display: flex;
  align-items: center;
  border-left: 0;
  margin-left: -5px;
  margin-right: 5px;
}

.twig.end i {
  display: none;
}

.twig.end em {
  width: 10px;
  height: 10px;
  display: flex;
  align-items: center;
  justify-content: center;
  border: 1px solid #999;
  background-color: #fff;
  font-style: normal;
  font-weight: 400;
  font-size: 10px;
  line-height: 1;
  color: #555;
}

.check {
  width: 15px;
  height: 15px;
  flex: none;
  display: flex;
  align-items: center;
  justify-content: center;
  background-color: #fafafa;
  border: 1px solid #d0d0d0;
  border-radius: 1px;
  font-family: "DejaVu Sans", sans-serif;
  font-size: 14px;
  font-weight: 700;
  line-height: 1;
  color: #000;
}

.row .check {
  margin: 0 6px 0 2px;
}

.row.sub .check {
  margin: 0 7px 0 3px;
}

.sym {
  width: 18px;
  height: 18px;
  flex: none;
  margin-right: 7px;
}

.swatch.blue { background-color: #0a2a96; }
.swatch.navy { background-color: #0a2b4a; }
.swatch.black { background-color: #000; }
.swatch.blank { background-color: #fff; border: 1px solid #eee; }
.swatch.outline { background-color: #fff; border: 1px solid #666; }
.swatch.dashed { background-color: #fff; border: 1px dashed #bbb; }

.tri {
  width: 0;
  height: 0;
  border-left: 8px solid transparent;
  border-right: 8px solid transparent;
  border-bottom: 16px solid #000;
  margin: 0 8px 0 1px;
  box-sizing: content-box;
}

.tri.red {
  border-bottom-color: #c8101c;
}

.vlines {
  border-left: 2px solid #8a8a8a;
  border-right: 2px solid #8a8a8a;
  width: 12px;
  margin: 0 10px 0 3px;
}

.hlines {
  border-top: 2px solid #8a8a8a;
  border-bottom: 2px solid #8a8a8a;
  height: 12px;
}

.dot {
  width: 7px;
  height: 7px;
  margin: 0 12px 0 6px;
  border-radius: 50%;
  background-color: #c8101c;
}

.name.plain {
  font-weight: 400;
  font-size: 12px;
}

.name.under {
  text-decoration: underline;
}

.splitter {
  width: 9px;
  flex: none;
  border-left: 2px solid #c8c8c8;
  padding-top: 317px;
}

.splitter i {
  display: block;
  height: 130px;
  background-image: radial-gradient(#c4c4c4 1px, transparent 1.2px);
  background-size: 3px 3px;
  background-position: 2px 0;
  background-repeat: repeat-y;
}

.canvas {
  flex: 1;
  min-width: 0;
  margin-top: 2px;
  background-color: #fff;
  border-left: 1px solid #bbb;
  border-top: 1px solid #ccc;
}

.map {
  display: block;
  width: 917px;
  height: 934px;
}

.map path {
  vector-effect: non-scaling-stroke;
  stroke-linejoin: round;
}

.blue { fill: #9fadd6; }
.olive { fill: #a3ad35; }
.navy { fill: #020d3a; }
.black { fill: #000; }
.edge { fill: none; stroke: #7483b0; stroke-width: 1; }
.line { fill: none; stroke: #636f9b; stroke-width: 1; }
.pale { fill: none; stroke: #a8aebd; stroke-width: 1.2; }
.grey { fill: none; stroke: #858585; stroke-width: 1; }

/* save dialog over the window */
.dialog {
  position: absolute;
  left: 295px;
  top: 646px;
  width: 471px;
  height: 461px;
  display: flex;
  flex-direction: column;
  background-color: #f0f0f0;
  border: 1px solid #2f8bd8;
  box-shadow: 0 4px 14px rgba(0, 0, 0, 0.3);
}

.dialog-title {
  height: 35px;
  flex: none;
  display: flex;
  align-items: center;
  padding: 0 19px 3px 8px;
  background-color: #fff;
  font-size: 12.9px;
}

.dialog-name {
  flex: 1;
  margin-left: 5px;
}

.dialog-help {
  font-size: 15px;
  margin-right: 43px;
}

.dialog-close {
  font-size: 15px;
}

.dialog-body {
  flex: 1;
  display: flex;
  flex-direction: column;
  padding: 16px 13px 0;
}

.form-row {
  height: 34px;
  flex: none;
  display: flex;
  align-items: center;
  padding-left: 9px;
}

.form-row.file,
.form-row.scr {
  height: 38px;
}

.form-row.layer {
  height: 30px;
}

.form-row label {
  width: 71px;
  flex: none;
}

.combo {
  height: 22px;
  flex: 1;
  min-width: 0;
  display: flex;
  align-items: center;
  justify-content: space-between;
  margin-right: 9px;
  padding-left: 4px;
  background: linear-gradient(#f6f6f6, #e6e6e6);
  border: 1px solid #c8c8c8;
  border-radius: 2px;
}

.combo .caret {
  border-left-width: 4px;
  border-right-width: 4px;
  border-top-width: 5px;
  margin: 0 5px 0 0;
}

.combo.tall {
  height: 28px;
  margin-right: 0;
}

.input {
  width: 255px;
  height: 23px;
  flex: none;
  display: flex;
  align-items: center;
  padding-left: 1px;
  background-color: #fff;
  border: 1px solid #d0d0d0;
  border-radius: 2px;
  white-space: nowrap;
  overflow: hidden;
}

.input.sunken {
  flex: 1;
  margin-right: 9px;
  background-color: #ededed;
  border: 1px solid #8c8c8c;
}

.btn {
  display: flex;
  align-items: center;
  justify-content: center;
  background: linear-gradient(#f8f8f8, #e8e8e8);
  border: 1px solid #bbb;
  border-radius: 2px;
}

.browse {
  width: 86px;
  height: 26px;
  margin-left: 12px;
  border-color: #8c8c8c;
}

.crs {
  width: 30px;
  height: 28px;
  margin: 0 9px 0 1px;
}

.crs svg {
  width: 20px;
  height: 20px;
}

.group {
  height: 202px;
  flex: none;
  display: flex;
  margin-top: 14px;
  border: 2px solid #d0d0d0;
  border-radius: 2px;
}

.group-main {
  flex: 1;
  min-width: 0;
  display: grid;
  grid-template-rows: 30px 29px 37px 35px 24px 38px;
  padding: 6px 10px 0 9px;
}

.opt-row {
  display: flex;
  align-items: center;
  justify-content: space-between;
  min-width: 0;
}

.opt-row .combo {
  flex: none;
  margin-right: 0;
}

.combo.short,
.spin {
  width: 197px;
}

.combo.long {
  width: 238px;
}

.opt-row.chk {
  justify-content: flex-start;
  gap: 5px;
  padding-left: 1px;
  font-size: 11.8px;
}

.opt-row.chk .check {
  background-color: #e8e8e8;
}

.opt-row.fold {
  justify-content: flex-start;
  gap: 11px;
  padding-left: 6px;
  white-space: nowrap;
  overflow: hidden;
}

.opt-row.fold strong {
  font-size: 13px;
  color: #444;
}

.tri-right {
  width: 0;
  height: 0;
  flex: none;
  border-top: 6px solid transparent;
  border-bottom: 6px solid transparent;
  border-left: 8px solid #444;
}

.opt-row.dim label {
  color: #888;
}

.spin {
  height: 22px;
  display: flex;
  align-items: center;
  justify-content: space-between;
  padding-left: 6px;
  background-color: #ececec;
  border: 1px solid #9a9a9a;
  border-radius: 2px;
  color: #888;
}

.spin em {
  width: 18px;
  height: 100%;
  display: flex;
  flex-direction: column;
  align-items: center;
  justify-content: space-evenly;
  border-left: 1px solid #ccc;
}

.spin em u {
  width: 0;
  height: 0;
  border-left: 4px solid transparent;
  border-right: 4px solid transparent;
  border-bottom: 4px solid #999;
}

.spin em u + u {
  border-bottom: 0;
  border-top: 4px solid #999;
}

.scroll {
  width: 18px;
  flex: none;
  display: flex;
  flex-direction: column;
  margin: 1px 1px 1px 0;
}

.sb-btn {
  height: 18px;
  flex: none;
  display: flex;
  align-items: center;
  justify-content: center;
  background-color: #f4f4f4;
  border: 1px solid #777;
  border-radius: 2px;
}

.sb-btn::before {
  content: "";
  border-left: 5px solid transparent;
  border-right: 5px solid transparent;
  border-bottom: 5px solid #111;
}

.sb-btn.down::before {
  border-bottom: 0;
  border-top: 5px solid #111;
}

.sb-thumb {
  height: 37px;
  flex: none;
  background-color: #eaeaea;
  background-image: radial-gradient(#aaa 1px, transparent 1.2px);
  background-size: 5px 5px;
  border: 1px solid #aaa;
}

.sb-track {
  flex: 1;
  background-color: #f6f6f6;
}

.dialog-actions {
  display: flex;
  justify-content: flex-end;
  gap: 12px;
  margin-top: 13px;
}

.action {
  width: 85px;
  height: 25px;
}
```
